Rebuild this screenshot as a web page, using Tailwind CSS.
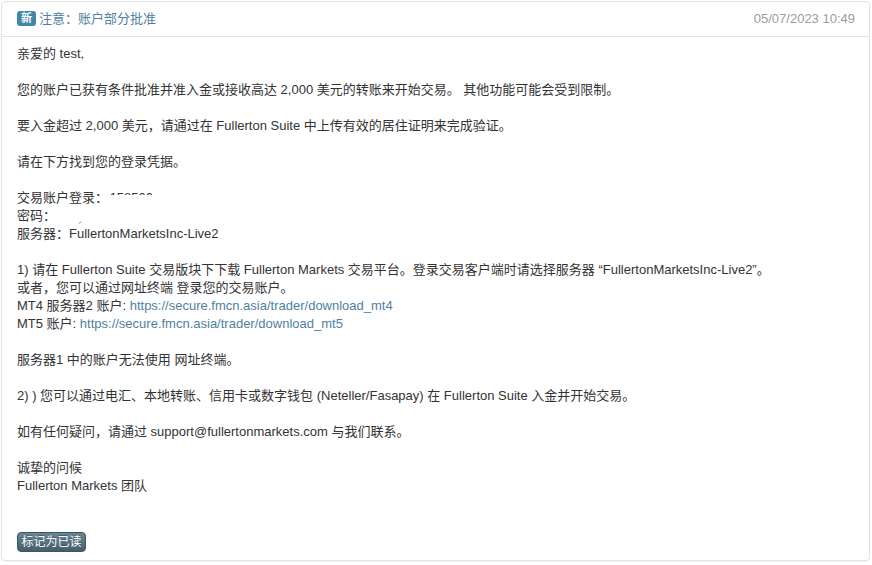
<!DOCTYPE html>
<html><head><meta charset="utf-8"><script src="https://cdn.jsdelivr.net/npm/@tailwindcss/browser@4"></script></head>
<body class="bg-white m-0">
<div class="w-[872px] h-[565px] bg-white pt-[1px] px-[1px] font-['Liberation_Sans','Noto_Sans_CJK_SC',sans-serif] text-[13px] leading-[18px] text-[#333]">
  <div class="w-[869px] h-[560px] border border-[#e2e2e2] rounded-[4px] flex flex-col shadow-[0_1px_1px_rgba(0,0,0,0.05)]">
    <div class="h-[35px] shrink-0 border-b border-[#e2e2e2] pl-[15px] pr-[14px] pb-[1px] flex items-center justify-between">
      <div class="flex items-center text-[#4f7f9f] text-[13px]">
        <span class="w-[19px] h-[15px] mr-[3px] rounded-[3px] bg-[#3f87a8] text-white text-[11px] font-bold leading-[15px] text-center">新</span>
        <span>注意：账户部分批准</span>
      </div>
      <span class="text-[#a09a9a] text-[13px]">05/07/2023 10:49</span>
    </div>
    <div class="flex-1 pl-[15px] pt-[8px] flex flex-col">
      <p>亲爱的 test,</p>
      <p class="mt-[18px]">您的账户已获有条件批准并准入金或接收高达 2,000 美元的转账来开始交易。 其他功能可能会受到限制。</p>
      <p class="mt-[18px]">要入金超过 2,000 美元，请通过在 Fullerton Suite 中上传有效的居住证明来完成验证。</p>
      <p class="mt-[18px]">请在下方找到您的登录凭据。</p>
      <p class="mt-[18px] relative">交易账户登录：<span class="-ml-[2px]"> 158500</span><span class="absolute left-[85px] top-[6px] w-[60px] h-[12px] bg-white"></span></p>
      <p class="relative h-[18px]">密码：<svg class="absolute left-[61px] top-[14px]" width="4" height="3" viewBox="0 0 4 3"><path d="M3 0.5 L1 2.5" stroke="#666" fill="none"/></svg></p>
      <p>服务器：FullertonMarketsInc-Live2</p>
      <p class="mt-[18px]">1) 请在 Fullerton Suite 交易版块下下载 Fullerton Markets 交易平台。登录交易客户端时请选择服务器 “FullertonMarketsInc-Live2”。</p>
      <p>或者，您可以通过网址终端 登录您的交易账户。</p>
      <p>MT4 服务器2 账户: <a class="text-[#4f7f9f]" href="#">https://secure.fmcn.asia/trader/download_mt4</a></p>
      <p>MT5 账户: <a class="text-[#4f7f9f]" href="#">https://secure.fmcn.asia/trader/download_mt5</a></p>
      <p class="mt-[18px]">服务器1 中的账户无法使用 网址终端。</p>
      <p class="mt-[18px]">2) ) 您可以通过电汇、本地转账、信用卡或数字钱包 (Neteller/Fasapay) 在 Fullerton Suite 入金并开始交易。</p>
      <p class="mt-[18px]">如有任何疑问，请通过 support@fullertonmarkets.com 与我们联系。</p>
      <p class="mt-[18px]">诚挚的问候</p>
      <p>Fullerton Markets 团队</p>
      <button class="mt-[37px] self-start w-[69px] h-[20px] rounded-[4px] border border-[#3d5562] bg-gradient-to-b from-[#6b8795] to-[#445e6b] text-white text-[12px] leading-[18px] text-center [text-shadow:0_-1px_0_rgba(0,0,0,0.25)]">标记为已读</button>
    </div>
  </div>
</div>
</body></html>
